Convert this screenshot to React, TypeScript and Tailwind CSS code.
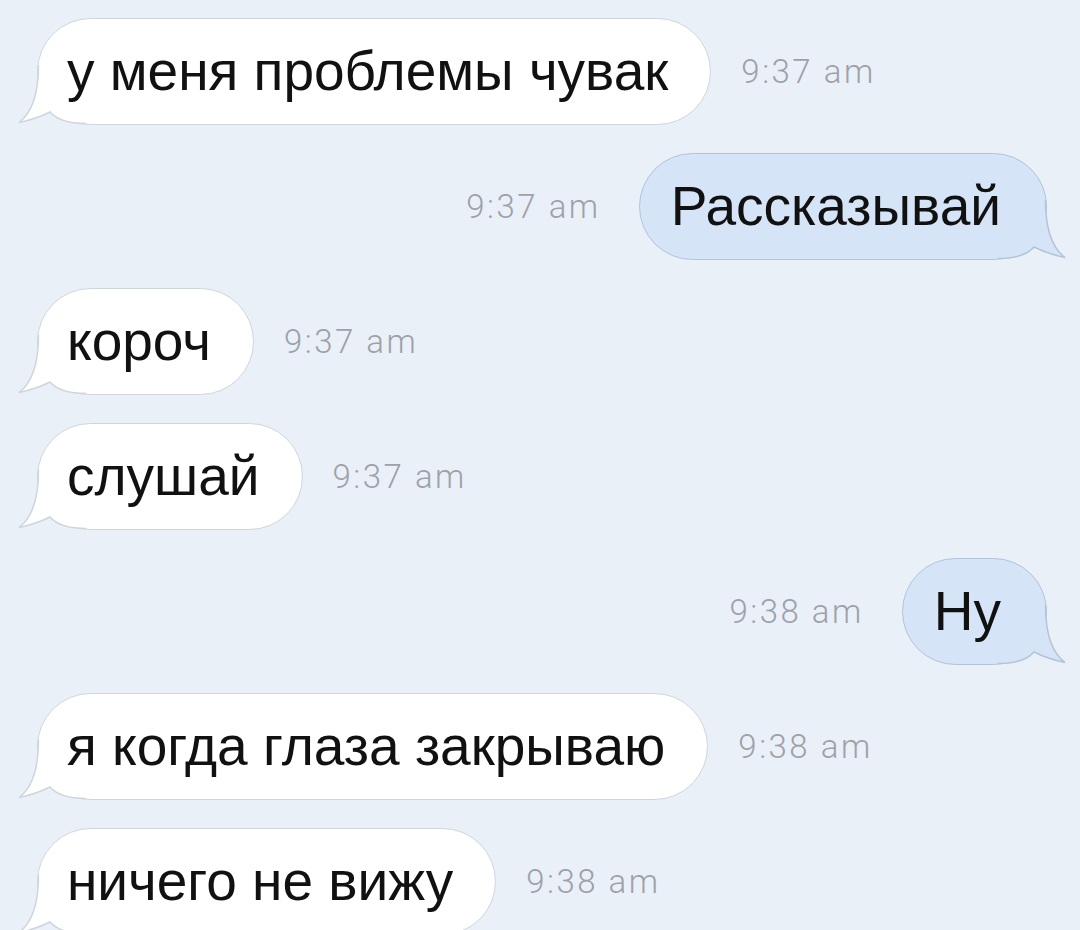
import type { ReactNode } from 'react'

type Msg = { text: string; time: string; mine?: boolean }

const messages: Msg[] = [
  { text: 'у меня проблемы чувак', time: '9:37 am' },
  { text: 'Рассказывай', time: '9:37 am', mine: true },
  { text: 'короч', time: '9:37 am' },
  { text: 'слушай', time: '9:37 am' },
  { text: 'Ну', time: '9:38 am', mine: true },
  { text: 'я когда глаза закрываю', time: '9:38 am' },
  { text: 'ничего не вижу', time: '9:38 am' },
]

// bubble tail, drawn for the left side; mirrored for my messages
function Tail({ fill, stroke, mine }: { fill: string; stroke: string; mine?: boolean }) {
  return (
    <svg
      width="70"
      height="60"
      viewBox="0 0 70 60"
      className={`absolute bottom-[-1px] ${mine ? 'right-[-22px] -scale-x-100' : 'left-[-22px]'}`}
    >
      <path d="M22.5 0 C22.5 28 16 48 3 57.5 Q20 54 34 47 Q44 58.5 70 58.5 L70 0 Z" fill={fill} />
      <path
        d="M22.5 0 C22.5 28 16 48 3 57.5 Q20 54 34 47 Q44 58.5 70 58.5"
        fill="none"
        stroke={stroke}
        strokeWidth="1.5"
      />
    </svg>
  )
}

function Time({ children }: { children: ReactNode }) {
  return (
    <span
      className="text-[33px] font-light tracking-[2.5px] text-[#9da1a8]"
      style={{ fontFamily: 'Roboto, "Liberation Sans", sans-serif' }}
    >
      {children}
    </span>
  )
}

function Row({ m }: { m: Msg }) {
  const bubble = (
    <div
      className={`relative flex h-[107px] items-center rounded-[54px] border-[1.5px] text-[55px] text-[#111] ${
        m.mine ? 'border-[#b3c3d9] bg-[#d5e4f7] pl-[31px] pr-[45px]' : 'border-[#cfd5dd] bg-white pl-[29px] pr-[42px]'
      }`}
    >
      {m.mine ? (
        <Tail fill="#d5e4f7" stroke="#b3c3d9" mine />
      ) : (
        <Tail fill="#ffffff" stroke="#cfd5dd" />
      )}
      <span className="relative">{m.text}</span>
    </div>
  )

  if (m.mine) {
    return (
      <div className="flex items-center justify-end gap-[38px] pr-[33px]">
        <Time>{m.time}</Time>
        {bubble}
      </div>
    )
  }
  return (
    <div className="flex items-center gap-[30px] pl-[37px]">
      {bubble}
      <Time>{m.time}</Time>
    </div>
  )
}

export default function App() {
  return (
    <div
      className="h-[930px] w-[1080px] overflow-hidden bg-[#eaf0f8] pt-[18px]"
      style={{ fontFamily: '"Liberation Sans", Arial, sans-serif' }}
    >
      <div className="flex flex-col gap-[28px]">
        {messages.map((m, i) => (
          <Row key={i} m={m} />
        ))}
      </div>
    </div>
  )
}
